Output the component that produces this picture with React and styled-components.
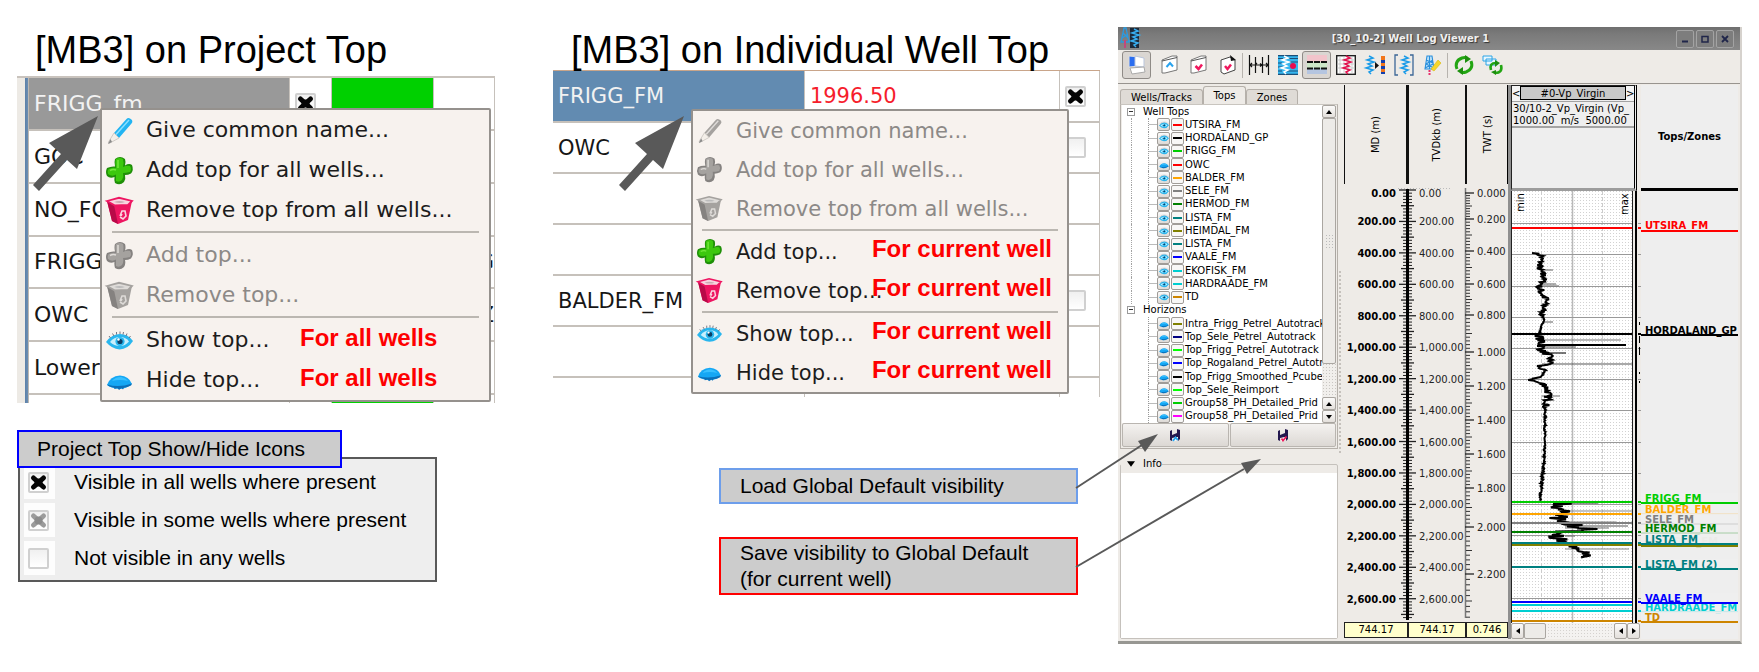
import React from "react";
import styled, { createGlobalStyle, css } from "styled-components";

const GlobalStyle = createGlobalStyle`
  *, *::before, *::after { box-sizing: border-box; }
  body { margin: 0; background: #fff; color: #000; font-family: "Liberation Sans", Arial, sans-serif; }
  button { font: inherit; color: inherit; margin: 0; padding: 0; }
  h2 { margin: 0; font-weight: 400; }
  svg { display: block; flex: none; overflow: visible; }
`;

const DEJAVU = '"DejaVu Sans", Verdana, sans-serif';

/* ---------- slide ---------- */

const Slide = styled.main`
  display: grid;
  grid-template-columns: 478fr 58px 547fr 18px 624fr;
  padding: 27px 17px 29px;
  align-items: start;
`;
const Column = styled.section`
  grid-column: ${(p) => p.$col};
  min-width: 0;
  padding-top: 3px;
`;
const Heading = styled.h2`
  padding-left: 18px;
  font-size: 38px;
  line-height: 40px;
  white-space: nowrap;
  position: relative;
  z-index: 1;
`;
const Figure = styled.div`
  position: relative;
  margin-top: ${(p) => p.$gap}px;
`;
const TableFrame = styled.div`
  height: ${(p) => p.$h}px;
  overflow: hidden;
  border-top: ${(p) => (p.$strip ? "2px solid #c9c3bd" : "1px solid #c9a58a")};
  ${(p) =>
    p.$strip &&
    css`
      display: flex;
      &::before {
        content: "";
        flex: none;
        width: 12px;
        background: linear-gradient(90deg, #edeae5 8px, #5b80a8 8px, #6d8fb3 11px, #bdb8b2 11px);
      }
    `}
`;
const TopsTable = styled.table`
  width: 100%;
  table-layout: fixed;
  border-collapse: collapse;
  font-family: ${DEJAVU};
  font-size: ${(p) => p.$size}px;
  color: #161616;
  td {
    padding: 0 0 0 5px;
    height: ${(p) => p.$row}px;
    border-bottom: 2px solid #c6c1bb;
    border-right: 1px solid #c6c1bb;
    white-space: nowrap;
    overflow: hidden;
    line-height: 26px;
  }
  tr:nth-child(3n + 2) td { height: ${(p) => p.$row + p.$extra}px; }
  tr:nth-child(3n) td { height: ${(p) => p.$row + p.$extra}px; }
`;
const NameCell = styled.td`
  ${(p) =>
    p.$bg &&
    css`
      background: ${p.$bg};
      color: #f2f2f2;
    `}
`;
const FillCell = styled.td`
  background: ${(p) => (p.$on ? "#00d000" : "none")};
`;
const ValueCell = styled.td`
  color: #f61d2c;
`;
const TailCell = styled.td`
  text-align: right;
`;

const Tick = styled.span`
  position: relative;
  display: block;
  width: 21px;
  height: 21px;
  input {
    appearance: none;
    display: block;
    width: 21px;
    height: 21px;
    margin: 0;
    border: 2px solid #d0d0d0;
    border-radius: 2px;
    background: linear-gradient(#f0f0f0, #fff);
  }
  svg { position: absolute; left: 3px; top: 3px; pointer-events: none; }
`;
function TickBox({ state, label }) {
  return (
    <Tick>
      <input type="checkbox" defaultChecked={state !== "off"} aria-label={label} />
      {state !== "off" && (
        <svg width="15" height="15" viewBox="0 0 15 15" aria-hidden="true">
          <path
            d="M2.500 3L12.500 12M12.500 3L2.500 12"
            stroke={state === "on" ? "#050505" : "#9b9b9b"}
            strokeWidth="5"
            strokeLinejoin="round"
            strokeLinecap="round"
            fill="none"
          />
          <circle cx="7.500" cy="7.500" r="4" fill={state === "on" ? "#050505" : "#8b8b8b"} />
        </svg>
      )}
    </Tick>
  );
}

/* ---------- context menus ---------- */

const Menu = styled.div`
  position: absolute;
  top: ${(p) => p.$top}px;
  left: ${(p) => p.$left}px;
  right: ${(p) => p.$right}px;
  border: 2px solid #95918d;
  border-radius: 2px;
  background: #f7f2ee;
  font-family: ${DEJAVU};
  font-size: ${(p) => p.$size}px;
  display: flex;
  flex-direction: column;
`;
const MenuItem = styled.button`
  position: relative;
  display: flex;
  align-items: center;
  gap: ${(p) => (p.$h > 39 ? 13 : 14)}px;
  height: ${(p) => p.$h}px;
  padding-left: 4px;
  border: 0;
  background: none;
  color: #1c1c1c;
  text-align: left;
  white-space: nowrap;
  line-height: 26px;
  &:disabled { color: #8c8987; }
`;
const Rule = styled.hr`
  width: 95%;
  margin: 1px auto ${(p) => p.$after}px;
  border: 0;
  height: 2px;
  background: #bbb7b1;
`;
const Note = styled.span`
  position: absolute;
  ${(p) => p.$side};
  top: ${(p) => (p.$h > 39 ? 4 : 3)}px;
  font: bold 24px/27px "Liberation Sans", Arial, sans-serif;
  color: #fe0000;
`;

function Glyph({ kind, off, size }) {
  const shades = off
    ? { a: "#a5a29f", b: "#858280", c: "#dedbd8" }
    : {
        pencil: { a: "#22b4f2", b: "#128cd0", c: "#8be0ff" },
        plus: { a: "#3cc80e", b: "#1f8f08", c: "#74e93c" },
        bin: { a: "#ee1561", b: "#b80a48", c: "#f9d4df" },
        eye: { a: "#29b6ee", b: "#0d3f66", c: "#c9effc" },
        lid: { a: "#15a7f4", b: "#0b6fb8", c: "#38c0ff" },
      }[kind];
  const { a, b, c } = shades;
  return (
    <svg width={size} height={size} viewBox="0 0 27 27" aria-hidden="true">
      {kind === "pencil" && (
        <g>
          <path d="M8 16L20.500 2Q22 .5 24 1.500L26 3Q27 5 25.500 6.500L13 21Z" fill={a} />
          <path d="M10 17.500L23 3" stroke={c} strokeWidth="1.500" />
          <path d="M8 16L13 21L3 26.500Q2 26.500 2.500 25Z" fill="#f4efe9" stroke="#c5c0bb" strokeWidth=".8" />
          <path d="M4.500 22L2 27L6 25Z" fill="#8a8a8a" />
        </g>
      )}
      {kind === "plus" && (
        <g>
          <path
            d="M9 2Q14-2 19 2Q20 5 19 8.500Q23 6 26 8Q28 13 25 16.500Q22 18 19 18Q20 22 18 25Q14 29 9 26Q8 22 8.500 20Q4 22 1 19Q-1 15 1 11Q5 9 9 9.500Q8 5 9 2Z"
            fill={b}
          />
          <path
            d="M10 2Q14 0 17 2Q18 5 17 10Q21 8 24 9Q26 12 24 15Q20 16 17 16Q18 20 16 23Q13 26 10 24V17.500Q6 20 2 17Q1 13 3 12Q7 10 10 11Q9 5 10 2Z"
            fill={a}
          />
          <path d="M12 3V11M4 13.500Q7 12 10 13" stroke={c} strokeWidth="1.500" fill="none" />
        </g>
      )}
      {kind === "bin" && (
        <g>
          <path d="M1 4L9 8L23 7L26 4L22 23L12 27L6 24Z" fill={a} />
          <path d="M1 4L8 8L12 27L6 24Z" fill={b} />
          <path d="M1 4L13 .8L26 4L22 8L9 8.500Z" fill={c} stroke={a} strokeWidth="1.800" />
          <path d="M8 5Q13 3 19 5Q14 7 8 5Z" fill={off ? "#bbb" : "#c9a9b2"} />
          <path d="M14 19L16 14L19 14L20 19L17 22L14 20M16 17L15 19" fill="none" stroke={c} strokeWidth="1.600" />
        </g>
      )}
      {kind === "eye" && (
        <g>
          <path d="M0 15Q6 7 14 7T27 14Q22 22 13.500 22.500Q6 22 0 15Z" fill={a} />
          <path d="M4 15Q8 10 14 10T23 14.500Q19 19 14 19Q8 19 4 15Z" fill={c} />
          <circle cx="14" cy="14.500" r="4.600" fill={a} />
          <circle cx="14" cy="14.500" r="2.600" fill={b} />
          <circle cx="12.500" cy="12.500" r="1.200" fill="#fff" />
          <path d="M3 9L4.500 11M6.500 6.500L8 9M10.500 5V7.500M14 4.500V7M17.500 5L17 7.500M21 6.500L20 9M24.500 9L23 11" stroke="#667" strokeWidth=".9" />
        </g>
      )}
      {kind === "lid" && (
        <g>
          <path d="M1 18Q4 9 14 8.500Q23 9 26 17Q20 22 13 22Q5 21 1 18Z" fill={a} />
          <path d="M6 14Q9 10 15 10Q20 11 22 14Q14 12 6 14Z" fill={c} />
          <path d="M1 17.500Q13 21 26 16.500L25 18.500Q20 21 18 20.500L17 22.500L15.500 21L13 23L11.500 21L8.500 22L8 20.500Q3 20 1 17.500Z" fill={b} />
        </g>
      )}
    </svg>
  );
}

function ContextMenu({ place, size, rowHeight, noteSide, ruleAfter, groups }) {
  return (
    <Menu role="menu" $top={place[0]} $right={place[1]} $left={place[2]} $size={size}>
      {groups.map((items, g) => (
        <React.Fragment key={g}>
          {g > 0 && <Rule $after={ruleAfter} />}
          {items.map(([kind, text, off, note]) => (
            <MenuItem key={text} role="menuitem" disabled={off} $h={rowHeight}>
              <Glyph kind={kind} off={off} size={rowHeight > 39 ? 27 : 25} />
              {text}
              {note && (
                <Note $side={noteSide} $h={rowHeight}>
                  {note}
                </Note>
              )}
            </MenuItem>
          ))}
        </React.Fragment>
      ))}
    </Menu>
  );
}

const Pointer = styled.svg`
  position: absolute;
  left: ${(p) => p.$x}px;
  top: ${(p) => p.$y}px;
`;
function FatArrow({ x, y }) {
  return (
    <Pointer $x={x} $y={y} width="65" height="75" viewBox="0 0 65 75" aria-hidden="true">
      <path d="M65 0L16 27L28 38L0 69L6 75L34 44L44 53Z" fill="#595959" />
    </Pointer>
  );
}

/* ---------- legend and callouts ---------- */

const LegendTitle = styled.div`
  position: relative;
  z-index: 1;
  width: 325px;
  margin: 27px 0 -11px;
  padding-left: 18px;
  border: 2px solid #0000fe;
  background: #ccc;
  font-size: 21px;
  line-height: 34px;
`;
const Legend = styled.div`
  width: 419px;
  margin-left: 1px;
  padding: 4px 0 3px 4px;
  border: 2px solid #595959;
  background: #eee;
  font-size: 21px;
  line-height: 24px;
`;
const LegendRow = styled.div`
  display: flex;
  align-items: center;
  gap: 19px;
  height: 38px;
`;
const Tile = styled.span`
  display: flex;
  align-items: center;
  width: 31px;
  height: 34px;
  padding-left: 4px;
  background: #fdfdfd;
`;
const Callout = styled.div`
  position: relative;
  width: 359px;
  margin: ${(p) => p.$gap}px 22px 0 auto;
  padding: ${(p) => p.$pad} 0 ${(p) => p.$pad} 19px;
  border: 2px solid ${(p) => p.$edge};
  background: #ccc;
  font-size: 21px;
  line-height: 26px;
`;
const Connector = styled.svg`
  position: absolute;
  left: 100%;
  bottom: ${(p) => p.$up}px;
  z-index: 2;
`;

/* ---------- viewer window ---------- */

const Window = styled.section`
  grid-column: 5;
  min-width: 0;
  background: #eeebe7;
  border-right: 2px solid #d6d2cd;
  border-bottom: 3px solid #979792;
  font-family: ${DEJAVU};
  font-size: 10px;
  line-height: 12px;
`;
const TitleBar = styled.header`
  display: flex;
  align-items: center;
  height: 23px;
  padding: 0 6px 0 3px;
  background: linear-gradient(#6f6f6f, #7a7a7a 30%, #888);
  color: #f0f0f0;
`;
const Title = styled.h1`
  flex: 1;
  margin: 0;
  padding-left: 8px;
  text-align: center;
  font-size: 10px;
  text-shadow: 1px 1px 1px #333;
  white-space: nowrap;
`;
const WinButton = styled.button`
  width: 18px;
  height: 18px;
  margin-left: 2px;
  display: grid;
  place-items: center;
  border: 1px solid #a3a3a3;
  border-radius: 2px;
  background: #7d7d7d;
`;
const Toolbar = styled.div`
  display: flex;
  align-items: center;
  height: 34px;
  padding: 0 0 3px 4px;
  border-bottom: 1px solid #98948f;
`;
const ToolButton = styled.button`
  display: grid;
  place-items: center;
  width: 29px;
  height: 28px;
  margin-right: ${(p) => (p.$gap ? 4 : 0)}px;
  border: ${(p) => (p.$on ? "1px solid #8f8b87" : "1px solid transparent")};
  border-radius: 3px;
  background: ${(p) => (p.$on ? "#dad6d2" : "none")};
`;
const ToolDivider = styled.span`
  width: 1px;
  height: 25px;
  margin-right: 1px;
  background: #b7b3ae;
`;
const Body = styled.div`
  display: flex;
  padding: 1px 0 2px;
`;
const SidePane = styled.div`
  flex: none;
  width: 220px;
  padding: 1px 0 0 2px;
  display: flex;
  flex-direction: column;
`;
const TabBar = styled.div`
  display: flex;
  align-items: flex-end;
  height: 18px;
`;
const Tab = styled.button`
  width: ${(p) => p.$w}px;
  height: ${(p) => (p.$on ? 18 : 15)}px;
  border: 1px solid #b5b0aa;
  border-bottom: 0;
  border-radius: 3px 3px 0 0;
  background: ${(p) => (p.$on ? "#eeebe7" : "#dfdbd6")};
  line-height: 13px;
`;
const TabPanel = styled.div`
  border: 1px solid #b5b0aa;
  border-top-color: #c9c5bf;
  padding: 0 1px 1px;
`;
const TreeRow = styled.div`
  display: flex;
`;
const Tree = styled.ul`
  flex: 1;
  min-width: 0;
  height: 318px;
  margin: 0;
  padding: 0;
  list-style: none;
  display: flex;
  flex-direction: column;
  overflow: hidden;
  background: #fff;
`;
const Branch = styled.li`
  flex: 1;
  display: flex;
  align-items: center;
  gap: 8px;
  padding-left: 5px;
  min-height: 0;
`;
const Expander = styled.button`
  width: 8px;
  height: 8px;
  border: 1px solid #9a9a9a;
  background: linear-gradient(#fff 2px, #333 2px, #333 3px, #fff 3px);
  background-clip: content-box;
  padding: 0 1px;
`;
const Leaf = styled.li`
  flex: 1;
  min-height: 0;
  display: flex;
  align-items: center;
  margin-left: 9px;
  padding-left: 16px;
  border-left: 1px dotted ${(p) => (p.$outer ? "#a3a3a3" : "transparent")};
  white-space: nowrap;
`;
const Twig = styled.span`
  flex: none;
  align-self: stretch;
  width: 9px;
  border-left: 1px dotted #999;
  background: linear-gradient(#bbb, #bbb) center / 100% 1px no-repeat;
`;
const LeafButton = styled.button`
  flex: none;
  display: grid;
  place-items: center;
  width: 13px;
  height: 13px;
  margin-right: 1px;
  border: 1px solid #a09c98;
  border-radius: 2px;
  background: ${(p) =>
    p.$color
      ? `linear-gradient(${p.$color}, ${p.$color}) center / 9px 2px no-repeat, #f8f7f6`
      : "linear-gradient(#fafafa, #dedad6)"};
`;
const ScrollV = styled.div`
  flex: none;
  width: 14px;
  display: flex;
  flex-direction: column;
  background: radial-gradient(#c9c6c2 1px, #f1efec 1px) 0 0 / 3px 3px;
`;
const ScrollH = styled.div`
  display: flex;
  height: 16px;
  margin-right: 1px;
  background: radial-gradient(#d5d2cf 1px, #f4f2f0 1px) 0 0 / 3px 3px;
`;
const ScrollButton = styled.button`
  flex: none;
  display: grid;
  place-items: center;
  width: ${(p) => (p.$across ? 13 : 14)}px;
  height: ${(p) => (p.$across ? 16 : 13)}px;
  border: 1px solid #a8a49f;
  border-radius: 2px;
  background: linear-gradient(#fbfaf9, #e4e0dc);
`;
const Thumb = styled.div`
  ${(p) => (p.$across ? "width: 22px; margin-right: auto;" : "height: 246px; margin-bottom: auto;")}
  display: grid;
  place-items: center;
  border: 1px solid #aaa6a1;
  border-radius: 2px;
  background: #edebe8;
  &::after {
    content: "";
    width: ${(p) => (p.$across ? 0 : 9)}px;
    height: 15px;
    background: radial-gradient(#bbb 1px, transparent 1px) 0 0 / 3px 3px;
  }
`;
const SaveRow = styled.div`
  display: grid;
  grid-template-columns: 1fr 1fr;
  gap: 1px;
  height: 24px;
`;
const SaveButton = styled.button`
  display: grid;
  place-items: center;
  border: 1px solid #b9b5b0;
  border-radius: 2px;
  background: linear-gradient(#f4f2f0, #dcd8d4);
`;
const InfoBox = styled.fieldset`
  flex: 1;
  min-width: 0;
  margin: 9px 0 0;
  padding: 3px 0 0;
  border: 1px solid #c5c1bc;
  border-radius: 2px;
  display: flex;
  background: #eeebe7;
  legend {
    display: flex;
    align-items: center;
    gap: 8px;
    padding: 0 0 0 6px;
  }
  &::after { content: ""; flex: 1; background: #fff; }
`;
const Splitter = styled.div`
  flex: none;
  align-self: center;
  width: 5px;
  height: 182px;
  margin-left: 1px;
  border-left: 2px dotted #c5c1bc;
`;
const Axes = styled.div`
  flex: none;
  width: 164px;
`;
const AxisHeads = styled.div`
  display: grid;
  grid-template-columns: 62px 59px 43px;
  height: 99px;
  border-right: 1px solid #000;
`;
const AxisHead = styled.div`
  display: grid;
  place-items: center;
  border-left: ${(p) => p.$line}px solid #111;
  span { writing-mode: vertical-rl; transform: rotate(180deg); white-space: nowrap; }
`;
const AxisValues = styled.div`
  display: grid;
  grid-template-columns: 63px 58px 43px;
  height: 16px;
`;
const AxisValue = styled.output`
  border: 1px solid #222;
  border-left-width: ${(p) => (p.$first ? 1 : 2)}px;
  border-right-width: ${(p) => (p.$last ? 1 : 0)}px;
  background: #ffffcc;
  text-align: center;
  line-height: 14px;
`;
const Track = styled.div`
  flex: none;
  width: 133px;
  border-left: 3px solid #8f8f8f;
`;
const TrackHead = styled.div`
  height: 106px;
  margin-right: 4px;
  border: 1px solid #222;
  border-bottom: 3px solid #9c9c9c;
  background: #eee;
  border-right: 3px double #000;
`;
const TrackName = styled.div`
  display: flex;
  justify-content: space-between;
  height: 15px;
  button { width: 8px; border: 0; background: #f4f4f4; line-height: 13px; }
  strong { flex: 1; font-weight: 400; text-align: center; line-height: 13px; border: 1px solid #000; background: #c9c9c9; margin-bottom: 1px; }
`;
const TrackInfo = styled.div`
  height: 27px;
  padding: 1px 0 0 1px;
  border: solid #a3a3a3;
  border-width: 1px 0 2px;
  overflow: hidden;
  white-space: pre;
`;
const TopsPane = styled.div`
  flex: 1;
  min-width: 0;
  margin-right: 2px;
  background: #eee;
  overflow: hidden;
  svg { overflow: hidden; }
`;
const TopsHead = styled.div`
  display: grid;
  place-items: center;
  height: 106px;
  border-bottom: 3px solid #000;
  font-weight: 700;
`;

const Arrowhead = ({ dir, size = 6 }) => {
  const d = {
    up: "M0 5L3 1L6 5Z",
    down: "M0 1L3 5L6 1Z",
    left: "M5 0L1 3L5 6Z",
    right: "M1 0L5 3L1 6Z",
  }[dir];
  return (
    <svg width={size} height={size} viewBox="0 0 6 6" aria-hidden="true">
      <path d={d} />
    </svg>
  );
};

/* ---------- toolbar drawings ---------- */

const WAVE = "M0 1L4 3L-2 5L5 7L-1 9L3 11L-3 13L4 15L0 17L2 19";
const PAGE = "M2 5L12 1L17 1V15L5 18L2 18Z";

const TOOLS = {
  pane: (
    <>
      <path d="M2 1L13 2V11L2 12Z" fill="#2a6df0" stroke="#ddd" />
      <path d="M8 1L17 3V12L8 11Z" fill="#fff" stroke="#b9c5dc" />
      <path d="M3 13L17 12L18 17L5 19Z" fill="#fff" stroke="#aaa" />
    </>
  ),
  up: (
    <>
      <path d={PAGE} fill="#fff" stroke="#777" />
      <path d="M2 6L17 2.500" stroke="#555" />
      <path d="M6.500 12L10 8L13 11.500" stroke="#29a3ee" strokeWidth="2" fill="none" />
    </>
  ),
  down: (
    <>
      <path d={PAGE} fill="#fff" stroke="#777" />
      <path d="M2 6L17 2.500" stroke="#555" />
      <path d="M6.500 11L9.500 14L13 9.500" stroke="#f0185e" strokeWidth="2.500" fill="none" />
    </>
  ),
  check: (
    <>
      <path d="M3 5L12 2L17 5V15L6 19L3 17Z" fill="#fff" stroke="#444" />
      <path d="M12 0L18 5L13 6Z" fill="#111" />
      <path d="M7 11L9.500 14L13 9.500" stroke="#f0185e" strokeWidth="2.500" fill="none" />
    </>
  ),
  widths: (
    <path d="M0.500 0V20M6.500 2V18M13.500 2V18M19.500 0V20M1 10H19M3 8L1 10L3 12M8 8L6 10M17 8L19 10L17 12M11 8.500L13 10L11 11.500" stroke="#111" fill="none" strokeWidth="1.200" />
  ),
  seismic: (
    <>
      <rect width="20" height="20" fill="#35b5ee" />
      <path d="M0 .7H20M0 3.500H5M11 3.500H20M0 8H4M12 7H20M0 12H5M0 16H4M9 16H20M0 19.300H20" stroke="#1c4f78" strokeWidth="1.200" />
      <g transform="translate(6 0)"><path d={WAVE} stroke="#fff" fill="none" strokeWidth="1.500" /></g>
      <circle cx="15" cy="11" r="3" fill="#e80c50" />
    </>
  ),
  zones: (
    <>
      <rect width="20" height="7" fill="#f2c4cb" />
      <rect y="7" width="20" height="6" fill="#cde6c7" />
      <rect y="13" width="20" height="6" fill="#b5c5e0" />
      <path d="M0 7H20M0 13.500H20" stroke="#111" strokeWidth="2.200" strokeDasharray="6 1" />
    </>
  ),
  grid: (
    <>
      <rect x=".7" y=".7" width="18.600" height="18.600" fill="#fff" stroke="#222" strokeWidth="1.400" />
      <path d="M4 1V19M8 1V19M12 1V19M16 1V19M1 5H19M1 9H19M1 13H19" stroke="#bbb" strokeWidth=".7" />
      <g transform="translate(10 0)"><path d={WAVE} stroke="#e3124f" fill="none" strokeWidth="1.500" /></g>
    </>
  ),
  convert: (
    <>
      <g transform="translate(4 0)"><path d={WAVE} stroke="#1a9be8" fill="none" strokeWidth="1.500" /></g>
      <path d="M10 7L14 10.500L10 14Z" fill="#111" />
      <path d="M18 1V19" stroke="#123fae" strokeWidth="4" />
      <path d="M18 1V5M18 8V11M18 14V17" stroke="#f2761b" strokeWidth="4" />
    </>
  ),
  bracket: (
    <>
      <path d="M4 0H1V20H4M16 0H19V20H16" stroke="#3c6797" fill="none" strokeWidth="1.300" />
      <g transform="translate(10 0)"><path d={WAVE} stroke="#1a9be8" fill="none" strokeWidth="1.500" /></g>
    </>
  ),
  edit: (
    <>
      <path d="M4 1H9L11 14H2Z" fill="#bfe3f8" />
      <path d="M4 1H9L11 14H2ZM3 5L10 8M10 5L3 9M2 13L10 9M11 13L3 9M6.500 1V14" stroke="#2a8fdc" fill="none" strokeWidth="1.100" />
      <path d="M6.500 15V20" stroke="#e8316d" strokeWidth="2" strokeDasharray="2 1" />
      <path d="M8 14L15 5L18 8L11 16Z" fill="#f6d62b" stroke="#d9b80a" strokeWidth=".6" />
    </>
  ),
  refresh: (
    <>
      <path d="M3 14Q0 6 8 3Q11 2 13 3M17 6Q20 14 12 17Q9 18 7 17" stroke="#22a512" strokeWidth="3" fill="none" />
      <path d="M11 0L17 4L11 8ZM9 12L3 16L9 20Z" fill="#1c8f0d" />
    </>
  ),
  refreshAll: (
    <>
      <path d="M0 1H9V6H0ZM3 4H13V10H3Z" fill="#e8f7ff" stroke="#2aa4e6" />
      <path d="M8 15Q6 8 13 8M18 10Q20 18 12 18" stroke="#22a512" strokeWidth="2.600" fill="none" />
      <path d="M12 5L17 8L12 12ZM13 15L8 17L13 20Z" fill="#1c8f0d" />
    </>
  ),
};
const TOOL_ORDER = [
  "pane", "up", "down", "check", null,
  "widths", "seismic", "zones", "grid", "convert", "bracket", "edit", null,
  "refresh", "refreshAll",
];

/* ---------- data ---------- */

const WELL_TOPS = [
  ["UTSIRA_FM", "#ff0000", 1], ["HORDALAND_GP", "#000000", 1], ["FRIGG_FM", "#00cd00", 1],
  ["OWC", "#ff0000", 0], ["BALDER_FM", "#ffa500", 1], ["SELE_FM", "#808080", 1],
  ["HERMOD_FM", "#008000", 1], ["LISTA_FM", "#008080", 1], ["HEIMDAL_FM", "#808000", 1],
  ["LISTA_FM", "#008080", 1], ["VAALE_FM", "#0000ff", 1], ["EKOFISK_FM", "#00ced1", 1],
  ["HARDRAADE_FM", "#00ced1", 1], ["TD", "#cd8500", 1],
];
const HORIZONS = [
  ["Intra_Frigg_Petrel_Autotrack", "#808000"], ["Top_Sele_Petrel_Autotrack", "#000080"],
  ["Top_Frigg_Petrel_Autotrack", "#00ff00"], ["Top_Rogaland_Petrel_Autotrack", "#0000ff"],
  ["Top_Frigg_Smoothed_Pcube", "#000000"], ["Top_Sele_Reimport", "#00ff00"],
  ["Group58_PH_Detailed_Prid", "#00cd00"], ["Group58_PH_Detailed_Prid", "#ff00ff"],
];

/* name, line in the track, line in the label pane, label baseline, colour */
const MARKERS = [
  ["UTSIRA_FM", 37, 40, 38, "#ff0000"],
  ["HORDALAND_GP", 143, 144, 143, "#000000"],
  ["BALDER_FM", 323, 0, 322, "#ffa500"],
  ["FRIGG_FM", 311, 312, 311, "#00cd00"],
  ["SELE_FM", 332, 333, 332, "#808080"],
  ["HEIMDAL_FM", 354, 355, 354, "#808000"],
  ["HERMOD_FM", 341, 0, 341, "#008000"],
  ["LISTA_FM", 352, 353, 352, "#008080"],
  ["LISTA_FM (2)", 376, 378, 377, "#008080"],
  ["HARDRAADE_FM", 420, 0, 420, "#00ced1"],
  ["VAALE_FM", 411, 412, 411, "#0000ff"],
  ["TD", 430, 431, 430, "#cd8500"],
];

function makeCurve(points, jitter) {
  let seed = 7;
  const rand = () => {
    seed = (seed * 16807) % 2147483647;
    return seed / 2147483647 - 0.5;
  };
  let d = "";
  for (let i = 0; i < points.length - 1; i++) {
    const [x0, y0, k = 1] = points[i];
    const [x1, y1] = points[i + 1];
    const n = Math.max(1, Math.round((y1 - y0) / 0.7));
    for (let s = 0; s < n; s++) {
      const t = s / n;
      const x = x0 + (x1 - x0) * t + rand() * jitter * k;
      d += `${d ? "L" : "M"}${x.toFixed(1)} ${(y0 + (y1 - y0) * t).toFixed(1)}`;
    }
  }
  return d;
}
const UPPER = makeCurve(
  [
    [24, 62], [31, 65], [28, 78, 1.3], [34, 87], [28, 97, 1.6], [35, 109], [31, 124, 0.4], [33, 128, 0.2],
    [28, 143, 1.6], [30, 152, 1.6], [31, 160, 1.6], [38, 164, 1.2], [40, 173, 1.2], [27, 175], [33, 180, 0.3], [32, 184],
    [20, 189, 1.4], [34, 194, 1.2], [37, 201, 1.4], [37, 210, 1.2], [34, 217, 0.3], [34, 235, 0.3],
    [33, 270, 0.4], [30, 300, 0.4], [29, 310],
  ],
  6
);
const LOWER = makeCurve(
  [
    [53, 312, 1], [42, 317, 1], [54, 321, 0.6], [48, 325, 1], [44, 331, 1.1], [62, 334, 1.3], [74, 338, 1.3],
    [48, 342, 0.8], [44, 347, 0.9], [56, 351, 0.3], [60, 356, 0.7], [69, 361, 0.8], [80, 365, 0.8], [68, 367, 0.5],
  ],
  22
);
const SPIKES = [
  [42, 79, "#777"], [45, 93, "#777"], [48, 95, "#777"], [42, 131, "#777"], [110, 149, "#777"],
  [115, 154, "#000"], [65, 156, "#555"], [55, 162, "#222"], [122, 173, "#555"], [49, 205, "#888"],
  [87, 312, "#333"], [122, 320, "#888"], [105, 331, "#888"], [117, 335, "#555"], [98, 337, "#777"],
  [64, 345, "#777"], [118, 358, "#888"],
];
const TWT = [9, 35, 67, 100, 131, 168, 202, 236, 270, 304, 343, 390];

function DepthAxes() {
  const yOf = (m) => 6 + m * 0.1572;
  const ticks = [];
  for (let m = 0; m <= 2720; m += 20) ticks.push(m);
  const major = ticks.filter((m) => m % 200 === 0);
  const fmt = (m) => `${m.toLocaleString("en-US")}.00`;
  const small = [];
  TWT.forEach((y, i) => {
    const step = ((TWT[i + 1] || 444) - y) / 10;
    for (let s = 1; s < 10 && y + s * step < 434; s++) small.push([y + s * step, s === 5]);
  });
  return (
    <svg width="164" height="438" fontFamily='"DejaVu Sans", sans-serif' fontSize="10">
      <path d="M54 4.500H107" stroke="#bbb" strokeDasharray="1 2" />
      {ticks.map((m) => {
        const r = m % 200 === 0 ? 8 : m % 100 === 0 ? 6 : 4;
        return <path key={m} d={`M${63 - r} ${yOf(m)}H${64 + r}`} stroke="#222" strokeWidth={r > 4 ? 1.3 : 1} />;
      })}
      <path d="M63.500 5V436" stroke="#000" strokeWidth="3" />
      {major.map((m) => (
        <g key={m}>
          <text x="52" y={m ? yOf(m) + 4 : 13} textAnchor="end" fontWeight="700">{fmt(m)}</text>
          <text x="75" y={m ? yOf(m) + 4 : 13} fill="#222">{fmt(m)}</text>
        </g>
      ))}
      <path d="M121.500 4V434" stroke="#777" strokeWidth="1.500" />
      {small.map(([y, mid]) => (
        <path key={y} d={`M122 ${y}h${mid ? 6 : 4}`} stroke="#333" />
      ))}
      {TWT.map((y, i) => (
        <g key={y}>
          <path d={`M121 ${y}h9`} stroke="#222" strokeWidth="1.300" />
          <text x="133" y={y + 4} fill="#222">{(i * 0.2).toFixed(3)}</text>
        </g>
      ))}
    </svg>
  );
}

function LogTrack() {
  const rows = [];
  for (let i = 1; i < 14; i++) rows.push(Math.round(1 + i * 31.2) + 0.5);
  return (
    <svg width="130" height="432" fontFamily='"DejaVu Sans", sans-serif' fontSize="10">
      <defs>
        <pattern id="dots" width="6" height="6" patternUnits="userSpaceOnUse">
          <path d="M0 .5H1M3 .5H4M0 3.500H1M3 3.500H4" stroke="#d2d2d2" />
        </pattern>
      </defs>
      <rect width="122" height="432" fill="#fff" />
      <rect width="122" height="432" fill="url(#dots)" />
      <path d="M30.500 0V432M91.500 0V432" stroke="#ccc" strokeDasharray="4 2" />
      <path d="M61.500 0V432" stroke="#b9b9b9" strokeWidth="1.500" />
      {rows.map((y) => <path key={y} d={`M0 ${y}H122M127 ${y}H130`} stroke="#999" />)}
      {SPIKES.map(([x, y, c]) => (
        <path key={x + y * 200} d={`M${y > 300 ? 54 : 31} ${y}H${x}`} stroke={c} strokeWidth={c === "#000" ? 2 : 1.2} />
      ))}
      <path d={UPPER} fill="none" stroke="#000" strokeWidth="2" />
      <path d={LOWER} fill="none" stroke="#000" strokeWidth="2.200" />
      {MARKERS.map(([n, y, , , c]) => (
        <path key={n} d={`M0 ${y}H122M127 ${y}H130`} stroke={c} strokeWidth="2" />
      ))}
      <path d="M0 414H122" stroke="#00ced1" strokeWidth="2" />
      <path d="M.5 0V432M121.500 0V432" stroke="#222" />
      <path d="M125 0V432" stroke="#000" strokeWidth="2" />
      <path d="M128.500 131V134M128.500 145V152M128.500 156V164M128.500 181V183M128.500 190V192" stroke="#000" />
      <text transform="translate(13 21) rotate(-90)">min</text>
      <text transform="translate(117 24) rotate(-90)">max</text>
    </svg>
  );
}

function TopLabels() {
  return (
    <svg width="100%" height="448" fontFamily='"DejaVu Sans", sans-serif' fontSize="10" fontWeight="700">
      {MARKERS.map(([n, , line, base, c]) => (
        <g key={n}>
          {n !== "HEIMDAL_FM" && <rect y={base - 9} width="100%" height="10" fill="#eee" opacity=".85" />}
          <text x="4" y={base} fill={c} opacity={n === "HEIMDAL_FM" ? 0.2 : 1}>{n}</text>
          <line x1="0" x2="100%" y1={line || base + 1} y2={line || base + 1} stroke={c} strokeWidth="2" opacity={line ? 1 : 0.15} />
        </g>
      ))}
      <line x1="0" x2="100%" y1="355" y2="355" stroke="#808000" strokeWidth="1" />
    </svg>
  );
}

function LeafRow({ name, color, shown, outer }) {
  return (
    <Leaf $outer={outer}>
      <Twig />
      <LeafButton aria-label={`Visibility of ${name}`}>
        <Glyph kind={shown ? "eye" : "lid"} size={10} />
      </LeafButton>
      <LeafButton $color={color} aria-label={`Colour of ${name}`} />
      {name}
    </Leaf>
  );
}

function Floppy({ color, up }) {
  return (
    <svg width="12" height="13" viewBox="0 0 12 13" aria-hidden="true">
      <path d="M1 2L3 1V6L8 4V0L11 1V10L9 12V8L3 9V12L1 11Z" fill="#24184f" />
      <path d="M4 9L9 8V11L4 12.500Z" fill="#fff" />
      <path d={up ? "M4 12L6.500 8.500L9 11" : "M4.500 9.500L6 11.500L9.500 7.500"} stroke={color} strokeWidth="1.800" fill="none" />
    </svg>
  );
}

function Viewer() {
  return (
    <Window>
      <TitleBar>
        <svg width="18" height="21" viewBox="0 0 18 21" aria-hidden="true">
          <path d="M3 0L0 14H8L5 0ZM1 10L7 6M7 10L2 5" stroke="#2b9be0" fill="none" strokeWidth="1.300" />
          <path d="M4 12V20" stroke="#c2487d" strokeWidth="2" />
          <rect x="9" width="9" height="20" fill="#1d2a3a" />
          <g transform="translate(13 0)"><path d={WAVE} stroke="#38aef0" fill="none" strokeWidth="1.500" /></g>
        </svg>
        <Title>[30_10-2] Well Log Viewer 1</Title>
        <WinButton aria-label="Minimize">
          <svg width="8" height="8"><path d="M1 6.500H7" stroke="#20264a" strokeWidth="2" /></svg>
        </WinButton>
        <WinButton aria-label="Maximize">
          <svg width="8" height="8"><path d="M1 1.500H7V7H1Z" stroke="#20264a" strokeWidth="1.500" fill="none" /></svg>
        </WinButton>
        <WinButton aria-label="Close">
          <svg width="8" height="8"><path d="M1 1L7 7M7 1L1 7" stroke="#20264a" strokeWidth="1.800" /></svg>
        </WinButton>
      </TitleBar>
      <Toolbar role="toolbar">
        {TOOL_ORDER.map((t, i) =>
          t ? (
            <ToolButton key={t} aria-label={t} $on={t === "pane" || t === "zones"} $gap={t === "pane"}>
              <svg width="20" height="20" viewBox="0 0 20 20" aria-hidden="true">{TOOLS[t]}</svg>
            </ToolButton>
          ) : (
            <ToolDivider key={i} />
          )
        )}
      </Toolbar>
      <Body>
        <SidePane>
          <TabBar role="tablist">
            <Tab role="tab" $w={83}>Wells/Tracks</Tab>
            <Tab role="tab" $w={43} $on aria-selected>Tops</Tab>
            <Tab role="tab" $w={52}>Zones</Tab>
          </TabBar>
          <TabPanel role="tabpanel">
            <TreeRow>
              <Tree>
                <Branch><Expander aria-label="Collapse Well Tops" />Well Tops</Branch>
                {WELL_TOPS.map(([n, c, s], i) => <LeafRow key={i} name={n} color={c} shown={s} outer />)}
                <Branch><Expander aria-label="Collapse Horizons" />Horizons</Branch>
                {HORIZONS.map(([n, c], i) => <LeafRow key={i} name={n} color={c} />)}
              </Tree>
              <ScrollV>
                <ScrollButton aria-label="Scroll up"><Arrowhead dir="up" /></ScrollButton>
                <Thumb />
                <ScrollButton aria-label="Page up"><Arrowhead dir="up" /></ScrollButton>
                <ScrollButton aria-label="Scroll down"><Arrowhead dir="down" /></ScrollButton>
              </ScrollV>
            </TreeRow>
            <SaveRow>
              <SaveButton aria-label="Load default"><Floppy color="#2aa8f0" up /></SaveButton>
              <SaveButton aria-label="Save default"><Floppy color="#ee1c5c" /></SaveButton>
            </SaveRow>
          </TabPanel>
          <InfoBox>
            <legend><Arrowhead dir="down" size={8} />Info</legend>
          </InfoBox>
        </SidePane>
        <Splitter />
        <Axes>
          <AxisHeads>
            <AxisHead $line={1}><span>MD (m)</span></AxisHead>
            <AxisHead $line={3}><span>TVDkb (m)</span></AxisHead>
            <AxisHead $line={2}><span>TWT (s)</span></AxisHead>
          </AxisHeads>
          <DepthAxes />
          <AxisValues>
            <AxisValue $first>744.17</AxisValue>
            <AxisValue>744.17</AxisValue>
            <AxisValue $last>0.746</AxisValue>
          </AxisValues>
        </Axes>
        <Track>
          <TrackHead>
            <TrackName>
              <button aria-label="Previous track">&lt;</button>
              <strong>#0-Vp_Virgin</strong>
              <button aria-label="Next track">&gt;</button>
            </TrackName>
            <TrackInfo>{"30/10-2_Vp_Virgin (Vp_\n1000.00  m/s  5000.00"}</TrackInfo>
          </TrackHead>
          <LogTrack />
          <ScrollH>
            <ScrollButton $across aria-label="Scroll left"><Arrowhead dir="left" /></ScrollButton>
            <Thumb $across />
            <ScrollButton $across aria-label="Page left"><Arrowhead dir="left" /></ScrollButton>
            <ScrollButton $across aria-label="Scroll right"><Arrowhead dir="right" /></ScrollButton>
          </ScrollH>
        </Track>
        <TopsPane>
          <TopsHead>Tops/Zones</TopsHead>
          <TopLabels />
        </TopsPane>
      </Body>
    </Window>
  );
}

/* ---------- page ---------- */

const PROJECT_ROWS = [
  ["FRIGG_fm", "on", true, ""], ["GOC", null, false, ""], ["NO_FO", null, false, ""],
  ["FRIGG", null, false, "G"], ["OWC", null, false, "Z"], ["Lower", null, false, ""], ["", null, true, ""],
];
const WELL_ROWS = [
  ["FRIGG_FM", "1996.50", "on"], ["OWC", "", "off"], ["", "", null], ["", "", null],
  ["BALDER_FM", "", "off"], ["", "", null], ["", "", null],
];
const LEGEND = [
  ["on", "Visible in all wells where present"],
  ["some", "Visible in some wells where present"],
  ["off", "Not visible in any wells"],
];

export default function App() {
  const all = "For all wells";
  const one = "For current well";
  return (
    <>
      <GlobalStyle />
      <Slide>
        <Column $col={1}>
          <Heading>[MB3] on Project Top</Heading>
          <Figure $gap={6}>
            <TableFrame $h={327} $strip>
              <TopsTable $size={22} $row={52} $extra={1}>
                <colgroup>
                  <col style={{ width: "56%" }} />
                  <col style={{ width: "9%" }} />
                  <col style={{ width: "22%" }} />
                  <col />
                </colgroup>
                <tbody>
                  {PROJECT_ROWS.map(([name, state, fill, tail], i) => (
                    <tr key={i}>
                      <NameCell $bg={i === 0 ? "#999" : null}>{name}</NameCell>
                      <td>{state && <TickBox state={state} label={name} />}</td>
                      <FillCell $on={fill} />
                      <TailCell>{tail}</TailCell>
                    </tr>
                  ))}
                </tbody>
              </TopsTable>
            </TableFrame>
            <ContextMenu
              place={[32, 4, 83]}
              size={22}
              rowHeight={40}
              ruleAfter={2}
              noteSide="left: 198px"
              groups={[
                [["pencil", "Give common name..."], ["plus", "Add top for all wells..."], ["bin", "Remove top from all wells..."]],
                [["plus", "Add top...", true], ["bin", "Remove top...", true]],
                [["eye", "Show top...", false, all], ["lid", "Hide top...", false, all]],
              ]}
            />
            <FatArrow x={16} y={40} />
          </Figure>
          <LegendTitle>Project Top Show/Hide Icons</LegendTitle>
          <Legend>
            {LEGEND.map(([state, text]) => (
              <LegendRow key={state}>
                <Tile><TickBox state={state} label={text} /></Tile>
                {text}
              </LegendRow>
            ))}
          </Legend>
        </Column>

        <Column $col={3}>
          <Heading>[MB3] on Individual Well Top</Heading>
          <Figure $gap={0}>
            <TableFrame $h={327}>
              <TopsTable $size={21} $row={51} $extra={0}>
                <colgroup>
                  <col style={{ width: "46%" }} />
                  <col />
                  <col style={{ width: "40px" }} />
                </colgroup>
                <tbody>
                  {WELL_ROWS.map(([name, value, state], i) => (
                    <tr key={i}>
                      <NameCell $bg={i === 0 ? "#628bb1" : null}>{name}</NameCell>
                      <ValueCell>{value}</ValueCell>
                      <td>{state && <TickBox state={state} label={name} />}</td>
                    </tr>
                  ))}
                </tbody>
              </TopsTable>
            </TableFrame>
            <ContextMenu
              place={[39, 31, 138]}
              size={21}
              rowHeight={39}
              ruleAfter={1}
              noteSide="right: 15px"
              groups={[
                [["pencil", "Give common name...", true], ["plus", "Add top for all wells...", true], ["bin", "Remove top from all wells...", true]],
                [["plus", "Add top...", false, one], ["bin", "Remove top...", false, one]],
                [["eye", "Show top...", false, one], ["lid", "Hide top...", false, one]],
              ]}
            />
            <FatArrow x={66} y={46} />
          </Figure>
          <Callout $gap={71} $pad="3px" $edge="#6d9eeb">
            Load Global Default visibility
            <Connector $up={14} width="82" height="54" viewBox="0 0 82 54" aria-hidden="true">
              <path d="M0 54L66 11" stroke="#595959" strokeWidth="2" />
              <path d="M82 0L62 7L69 18Z" fill="#595959" />
            </Connector>
          </Callout>
          <Callout $gap={33} $pad="1px" $edge="#fe0000">
            Save visibility to Global Default
            <br />
            (for current well)
            <Connector $up={26} width="185" height="108" viewBox="0 0 185 108" aria-hidden="true">
              <path d="M0 108L168 10" stroke="#595959" strokeWidth="2" />
              <path d="M185 0L165 4L171 15Z" fill="#595959" />
            </Connector>
          </Callout>
        </Column>

        <Viewer />
      </Slide>
    </>
  );
}
